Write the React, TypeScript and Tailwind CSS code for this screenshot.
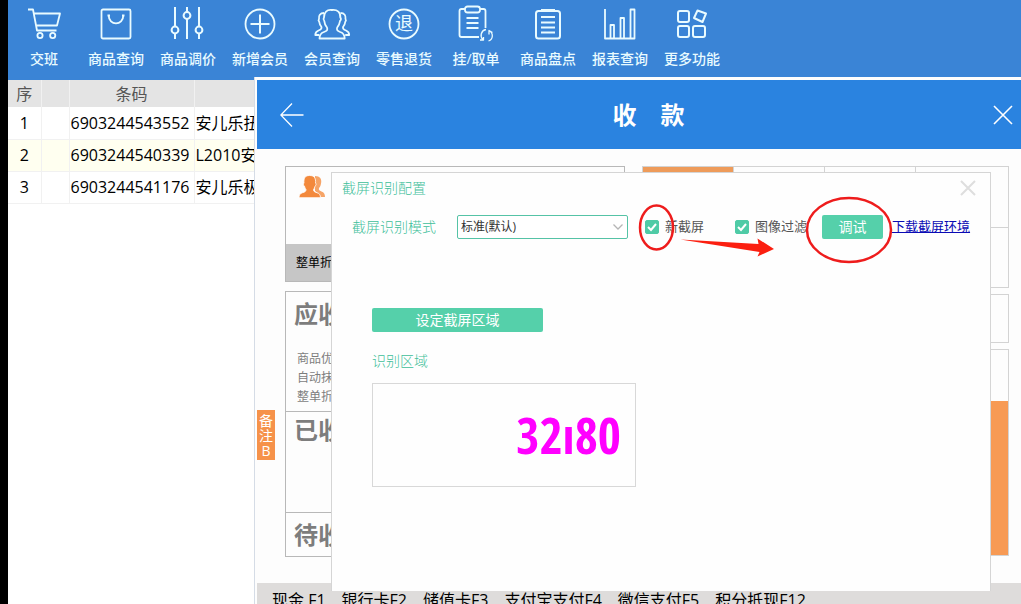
import type { ReactNode } from "react";

type Tool = { label: string; icon: ReactNode };

const tools: Tool[] = [
  {
    label: "交班",
    icon: (
      <>
        <path d="M4 5.5h5l4 21h19.5M10.5 9.5H36l-3 12H12.5" />
        <circle cx="16" cy="31.5" r="2.6" />
        <circle cx="28.7" cy="31.5" r="2.6" />
      </>
    ),
  },
  {
    label: "商品查询",
    icon: (
      <>
        <rect x="5.5" y="5.5" width="29" height="29" rx="1.5" />
        <path d="M11.5 11.5h2.5M26 11.5h2.5M12.7 11.5c0 10.5 14.6 10.5 14.6 0" />
      </>
    ),
  },
  {
    label: "商品调价",
    icon: (
      <g strokeWidth="2">
        <path d="M7 3v19.5M7 29.5v5.5M19 3v5M19 15v20M31 3v19.5M31 29.5v5.5" />
        <circle cx="7" cy="26" r="3.4" />
        <circle cx="19" cy="11.5" r="3.4" />
        <circle cx="31" cy="26" r="3.4" />
      </g>
    ),
  },
  {
    label: "新增会员",
    icon: (
      <>
        <circle cx="20" cy="20" r="14.5" />
        <path strokeWidth="2" d="M10.5 20h19M20 10.5v19" />
      </>
    ),
  },
  {
    label: "会员查询",
    icon: (
      <>
        <path d="M7.5 34.5c0-4 1.5-5.5 4.5-6.5 3-1 4-2 3-4.500-1.800-2-2.500-4-2.700-6.500-1.300-1.500-1-2.500-.3-3.500-.3-5 3-8.300 8-7.500 5.500-.6 8.700 2.500 8.300 7.500 1 1 .8 2.500-.3 3.500-.3 2.500-1.200 4.500-2.800 6.500-1 2.500.3 3.500 3 4.500 3 1 4.500 2.500 4.500 6.500z" />
        <path d="M12 9c-4 0-5.500 2.500-5 6-.8 1-.5 2 .3 3 .2 2 .8 3.500 2.200 5 .3 2-.5 2.800-3 3.500-2 .8-3.200 2-3.200 4.500h4M28.500 9c4 0 5.500 2.500 5 6 .8 1 .5 2-.3 3-.2 2-.8 3.500-2.200 5-.3 2 .5 2.800 3 3.500 2 .8 3.200 2 3.200 4.500h-4" />
      </>
    ),
  },
  {
    label: "零售退货",
    icon: (
      <>
        <circle cx="20" cy="20" r="14.5" />
        <text
          x="20"
          y="26"
          textAnchor="middle"
          fontSize="18"
          fill="currentColor"
          stroke="none"
        >
          退
        </text>
      </>
    ),
  },
  {
    label: "挂/取单",
    icon: (
      <>
        <path d="M9 5H5.500q-2 0-2 2v24q0 2 2 2h17.500M24 5h3.500q2 0 2 2v17" />
        <rect x="9" y="2.5" width="15" height="6" rx="2.5" />
        <path d="M10.5 14h12M10.5 19h12M10.5 24h12" />
        <path
          strokeWidth="1.3"
          d="M30 25.500c-5 1-6.500 7-3 10.300M27.500 33v3h-3.500M33 26.500c4.500 2.500 4.500 8.500-.5 10.500M36.500 28.500l-3.500-2v4"
        />
      </>
    ),
  },
  {
    label: "商品盘点",
    icon: (
      <>
        <rect x="8" y="7" width="24" height="27.5" rx="2.5" strokeWidth="2" />
        <path strokeWidth="3" d="M13 6.5h14" />
        <path d="M13 13h14M13 18.5h14M13 23.5h14M13 28.5h14" />
      </>
    ),
  },
  {
    label: "报表查询",
    icon: (
      <path d="M5 5v29.500h29.500V5.500h-4v29M10.500 34V21h3.500v13M20.500 34V14h3.500v20" />
    ),
  },
  {
    label: "更多功能",
    icon: (
      <g strokeWidth="2">
        <rect x="6" y="7" width="11" height="11" rx="2" />
        <rect x="6" y="22" width="11" height="11" rx="2" />
        <rect x="21" y="22" width="12" height="11" rx="2" />
        <path d="M25.500 6.500l8.500 3-3.500 8.500-8.500-4z" />
      </g>
    ),
  },
];

const rows = [
  { no: 1, code: "6903244543552", name: "安儿乐扭" },
  { no: 2, code: "6903244540339", name: "L2010安" },
  { no: 3, code: "6903244541176", name: "安儿乐极" },
];

const payments = [
  "现金 F1",
  "银行卡F2",
  "储值卡F3",
  "支付宝支付F4",
  "微信支付F5",
  "积分抵现F12",
];

function Toolbar() {
  return (
    <nav className="flex h-20 shrink-0 bg-[#3a84d6] text-[#e9fbff]">
      {tools.map((tool) => (
        <button
          key={tool.label}
          type="button"
          className="flex w-[72px] flex-col items-center pt-1"
        >
          <svg
            viewBox="0 0 40 40"
            className="size-10"
            fill="none"
            stroke="currentColor"
            strokeWidth="1.8"
            strokeLinejoin="round"
            aria-hidden="true"
          >
            {tool.icon}
          </svg>
          <span className="mt-1 text-sm leading-[22px] font-medium whitespace-nowrap">
            {tool.label}
          </span>
        </button>
      ))}
    </nav>
  );
}

function GoodsTable() {
  return (
    <section className="w-[246px] shrink-0 overflow-hidden">
      <table className="w-[325px] table-fixed border-collapse text-base leading-6 text-black">
        <colgroup>
          <col className="w-[33px]" />
          <col className="w-7" />
          <col className="w-[125px]" />
          <col />
        </colgroup>
        <thead>
          <tr className="h-[27px] bg-[#e4e4e4] text-[#555]">
            <th className="border-r border-[#f1f1f1] p-0 font-normal">序</th>
            <th className="border-r border-[#f1f1f1] p-0" />
            <th className="border-r border-[#f1f1f1] p-0 font-normal">条码</th>
            <th className="p-0" />
          </tr>
        </thead>
        <tbody>
          {rows.map((row) => (
            <tr
              key={row.no}
              className="h-8 border-b border-[#f1f1f1] even:bg-[#fffff0]"
            >
              <td className="border-r border-[#f1f1f1] p-0 text-center">
                {row.no}
              </td>
              <td className="border-r border-[#f1f1f1] p-0" />
              <td className="border-r border-[#f1f1f1] p-0 pl-px">
                {row.code}
              </td>
              <td className="p-0 pl-px whitespace-nowrap">{row.name}</td>
            </tr>
          ))}
        </tbody>
      </table>
    </section>
  );
}

function OrderSummary() {
  return (
    <div className="flex flex-col">
      <div className="flex flex-col border border-[#b8b8b8]">
        <div className="h-[77px] pt-2 pl-3">
          <svg viewBox="0 0 28 24" className="h-6 w-7" aria-hidden="true">
            <path
              fill="#f6a467"
              d="M17 1c5 0 7 3 6 7.500-.3 2-1 3.500-2 4.500-.5 2 .3 2.500 2.500 3.500 2.500 1 3.500 2.500 3.500 5.500h-6c0-3-1.500-4.500-4-6z"
            />
            <path
              fill="#f3893c"
              stroke="#fff"
              strokeWidth=".8"
              d="M11.500.5c5 0 6.500 3 6 7.500 1 1 .6 2.500-.5 3.200-.3 1.500-.8 2.500-1.500 3.300 0 2 1 2.500 3.500 3.200 2.500.8 3.500 2.300 3.500 5H1c0-2.700 1-4.200 3.500-5 2.500-.7 3.500-1.200 3.500-3.200-.7-.8-1.200-1.800-1.500-3.300-1.100-.7-1.500-2.200-.5-3.200-.5-4.500 1-7.500 5.500-7.500z"
            />
          </svg>
        </div>
        <div className="flex h-[37px] items-center bg-[#c6c6c6] pl-[10px] text-xs text-black">
          整单折扣
        </div>
      </div>
      <div className="mt-[9px] border border-[#b8b8b8] text-[#7d7d7d]">
        <div className="h-[119px] pt-[6px]">
          <h2 className="pl-2 text-2xl leading-8 font-bold">应收</h2>
          <ul className="mt-[19px] pl-[11px] text-xs leading-[19px]">
            <li>商品优惠</li>
            <li>自动抹零</li>
            <li>整单折扣</li>
          </ul>
        </div>
        <div className="h-[101px] border-t border-[#b8b8b8] pt-[2px]">
          <h2 className="pl-2 text-2xl leading-8 font-bold">已收</h2>
        </div>
        <div className="h-[44px] border-t border-[#b8b8b8] pt-[6px]">
          <h2 className="pl-2 text-2xl leading-8 font-bold">待收</h2>
        </div>
      </div>
    </div>
  );
}

function PayPanel() {
  return (
    <div className="flex flex-col">
      <div className="grid h-[122px] grid-cols-[91fr_91fr_91fr_93fr] grid-rows-2 border-t border-l border-[#d3d3d3]">
        <div className="border-r border-b border-[#d3d3d3] bg-[#ee9b5a]" />
        <div className="border-r border-b border-[#d3d3d3]" />
        <div className="border-r border-b border-[#d3d3d3]" />
        <div className="border-r border-b border-[#d3d3d3]" />
        <div className="border-r border-b border-[#d3d3d3]" />
        <div className="border-r border-b border-[#d3d3d3]" />
        <div className="border-r border-b border-[#d3d3d3]" />
        <div className="border-r border-b border-[#d3d3d3]" />
      </div>
      <div className="mt-[6px] h-[49px] border border-[#d3d3d3]" />
      <div className="mt-[6px] flex h-[207px] flex-col border border-[#d3d3d3]">
        <div className="mt-[51px] flex-1 bg-[#f79a54]" />
      </div>
    </div>
  );
}

function CheckOption({ id, label }: { id: string; label: string }) {
  return (
    <div className="flex items-center gap-[6px]">
      <span className="grid size-[14px] place-items-center">
        <input
          id={id}
          type="checkbox"
          defaultChecked
          className="peer col-start-1 row-start-1 size-[14px] appearance-none rounded-xs border border-[#4fcba6] checked:bg-[#4fcba6]"
        />
        <svg
          viewBox="0 0 14 14"
          className="pointer-events-none col-start-1 row-start-1 hidden size-[14px] peer-checked:block"
          fill="none"
          stroke="#fff"
          strokeWidth="2"
          aria-hidden="true"
        >
          <path d="M3 7l3 3 5-6" />
        </svg>
      </span>
      <label htmlFor={id} className="text-[13px] whitespace-nowrap text-[#555]">
        {label}
      </label>
    </div>
  );
}

function Annotations() {
  return (
    <svg
      viewBox="0 0 264 80"
      className="pointer-events-none absolute top-[17px] left-[299px] h-20 w-[264px]"
      fill="none"
      stroke="#ee1c1c"
      strokeWidth="2.5"
      aria-hidden="true"
    >
      <ellipse cx="25.5" cy="37.5" rx="16.5" ry="22" />
      <ellipse cx="218" cy="40" rx="42" ry="32" />
      <path
        fill="#fb1f10"
        stroke="none"
        d="M49.500 49.500l78 4.500-1-5.500L143 59l-16.500 7.500 2-4.500z"
      />
    </svg>
  );
}

function CaptureDialog() {
  return (
    <div
      role="dialog"
      aria-labelledby="capture-title"
      className="absolute top-[23px] right-[30px] bottom-[-8px] left-[74px] border border-b-0 border-[#d5d5d5] bg-[#fefefe]"
    >
      <div className="flex h-[30px] items-center justify-between pr-[14px] pl-[10px]">
        <h2 id="capture-title" className="text-sm font-light text-[#3fbf9a]">
          截屏识别配置
        </h2>
        <button type="button" aria-label="关闭配置">
          <svg
            viewBox="0 0 16 16"
            className="size-4"
            stroke="#dedede"
            strokeWidth="2"
            aria-hidden="true"
          >
            <path d="M1 1l14 14M15 1L1 15" />
          </svg>
        </button>
      </div>
      <div className="mt-3 flex h-6 items-center pl-5">
        <label
          htmlFor="capture-mode"
          className="text-sm font-light whitespace-nowrap text-[#3fbf9a]"
        >
          截屏识别模式
        </label>
        <div className="ml-[21px] grid h-6 w-[171px] items-center">
          <select
            id="capture-mode"
            className="col-start-1 row-start-1 h-6 w-full appearance-none rounded-xs border border-[#55c3a6] bg-white pl-[3px] text-xs text-[#333]"
          >
            <option>标准(默认)</option>
          </select>
          <svg
            viewBox="0 0 12 8"
            className="pointer-events-none col-start-1 row-start-1 mr-1 h-2 w-3 justify-self-end"
            fill="none"
            stroke="#b5b5b5"
            strokeWidth="1.3"
            aria-hidden="true"
          >
            <path d="M1.5 1.5L6 6l4.5-4.5" />
          </svg>
        </div>
        <div className="ml-[17px]">
          <CheckOption id="new-capture" label="新截屏" />
        </div>
        <div className="ml-[31px]">
          <CheckOption id="image-filter" label="图像过滤" />
        </div>
        <button
          type="button"
          className="ml-[15px] h-6 w-[61px] rounded-xs bg-[#55d0aa] text-sm text-white"
        >
          调试
        </button>
        <a
          href="#download"
          className="ml-[9px] text-[13px] whitespace-nowrap text-[#0a0ab4] underline"
        >
          下载截屏环境
        </a>
      </div>
      <div className="flex flex-col items-start pt-[69px] pl-10">
        <button
          type="button"
          className="h-6 w-[171px] rounded-xs bg-[#55d0aa] text-sm text-white"
        >
          设定截屏区域
        </button>
        <p className="mt-[19px] text-sm leading-5 font-light text-[#3fbf9a]">
          识别区域
        </p>
        <div className="mt-3 flex h-[104px] w-[264px] items-center justify-end border border-[#d8d8d8] pr-[14px]">
          <output className="font-['Liberation_Sans_Narrow','Open_Sans_Condensed','Roboto_Condensed','DejaVu_Sans_Condensed',sans-serif] text-[50px] leading-none font-bold text-[#ff00ff]">
            32ı80
          </output>
        </div>
      </div>
      <Annotations />
    </div>
  );
}

function PayWindow() {
  return (
    <section className="relative -mt-[3px] flex min-w-0 flex-1 flex-col border-l border-[#d5dce6] bg-[#fdfdfd] pt-[3px] pl-[2px]">
      <header className="flex h-[69px] shrink-0 items-center justify-between bg-[#2a83e0] pr-2 pl-[23px] text-white">
        <button type="button" aria-label="返回">
          <svg
            viewBox="0 0 24 24"
            className="size-6"
            fill="none"
            stroke="currentColor"
            strokeWidth="1.3"
            aria-hidden="true"
          >
            <path d="M12 .5L.8 12 12 23.5M1 12h22.5" />
          </svg>
        </button>
        <h1 className="text-2xl font-bold whitespace-pre">收　款</h1>
        <button type="button" aria-label="关闭">
          <svg
            viewBox="0 0 20 20"
            className="size-5"
            stroke="currentColor"
            strokeWidth="1.6"
            aria-hidden="true"
          >
            <path d="M1 1l18 18M19 1L1 19" />
          </svg>
        </button>
      </header>
      <div className="relative flex-1">
        <div className="grid grid-cols-[340fr_367fr] gap-[17px] pt-[17px] pr-3 pl-7">
          <OrderSummary />
          <PayPanel />
        </div>
        <button
          type="button"
          className="absolute top-[261px] left-0 flex h-[50px] w-[18px] flex-col items-center justify-center bg-[#f6924a] text-sm leading-[15px] text-white"
        >
          <span>备</span>
          <span>注</span>
          <span>B</span>
        </button>
        <CaptureDialog />
      </div>
      <footer className="flex h-[21px] shrink-0 gap-4 overflow-hidden bg-[#dedcdb] pt-[5px] pl-[15px] text-base leading-6 whitespace-nowrap text-black">
        {payments.map((item) => (
          <span key={item}>{item}</span>
        ))}
      </footer>
    </section>
  );
}

export default function App() {
  return (
    <div className="flex h-screen overflow-hidden bg-white font-['Open_Sans','Noto_Sans_CJK_SC',sans-serif]">
      <div className="w-2 shrink-0 bg-black" />
      <div className="flex min-w-0 flex-1 flex-col">
        <Toolbar />
        <main className="flex min-h-0 flex-1">
          <GoodsTable />
          <PayWindow />
        </main>
      </div>
    </div>
  );
}
